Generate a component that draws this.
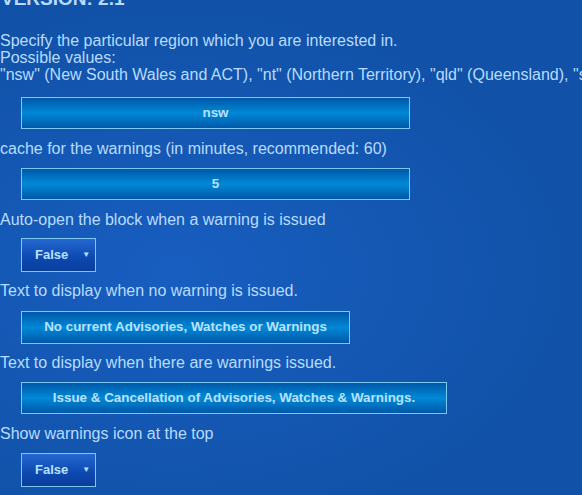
export default function App() {
  const inputCls =
    "h-[32px] border border-[#7cc8f0] bg-[linear-gradient(to_bottom,#0058a8,#0088d6_50%,#0058a8)] text-[#b8e2ff] text-[13.4px] font-bold flex items-center justify-center";
  const selectCls =
    "w-[75px] h-[34px] border border-[#7cc8f0] bg-[linear-gradient(to_bottom,#2468d0,#0c48b0_60%,#0a3e9c)] text-[#b8e2ff] text-[13px] font-bold flex items-center pl-[13px] gap-[14px]";
  const label = "text-[16px] leading-[17px]";

  return (
    <main
      className="w-[582px] h-[495px] overflow-hidden text-[#b8dcff] bg-[radial-gradient(ellipse_at_30%_55%,#185ec0,#1152a8_70%)]"
      style={{ fontFamily: '"Liberation Sans", Arial, sans-serif' }}
    >
      <h1 className="text-[19px] font-bold leading-[20px] mt-[-11px] ml-[1px]">VERSION: 2.1</h1>

      <div className="mt-[23px] whitespace-nowrap">
        <p className={label}>Specify the particular region which you are interested in.</p>
        <p className={label}>Possible values:</p>
        <p className={label}>
          "nsw" (New South Wales and ACT), "nt" (Northern Territory), "qld" (Queensland), "sa" (South Australia)
        </p>
      </div>

      <div className="pl-[21px] mt-[14px]">
        <div className={`${inputCls} w-[389px]`}>nsw</div>
      </div>

      <p className={`${label} mt-[11px]`}>cache for the warnings (in minutes, recommended: 60)</p>
      <div className="pl-[21px] mt-[11px]">
        <div className={`${inputCls} w-[389px]`}>5</div>
      </div>

      <p className={`${label} mt-[11px]`}>Auto-open the block when a warning is issued</p>
      <div className="pl-[21px] mt-[10px]">
        <div className={selectCls}>
          <span>False</span>
          <span className="text-[8px]">▼</span>
        </div>
      </div>

      <p className={`${label} mt-[10px]`}>Text to display when no warning is issued.</p>
      <div className="pl-[21px] mt-[12px]">
        <div className={`${inputCls} w-[329px] h-[33px]`}>No current Advisories, Watches or Warnings</div>
      </div>

      <p className={`${label} mt-[10px]`}>Text to display when there are warnings issued.</p>
      <div className="pl-[21px] mt-[11px]">
        <div className={`${inputCls} w-[426px]`}>Issue &amp; Cancellation of Advisories, Watches &amp; Warnings.</div>
      </div>

      <p className={`${label} mt-[11px]`}>Show warnings icon at the top</p>
      <div className="pl-[21px] mt-[11px]">
        <div className={selectCls}>
          <span>False</span>
          <span className="text-[8px]">▼</span>
        </div>
      </div>
    </main>
  );
}
